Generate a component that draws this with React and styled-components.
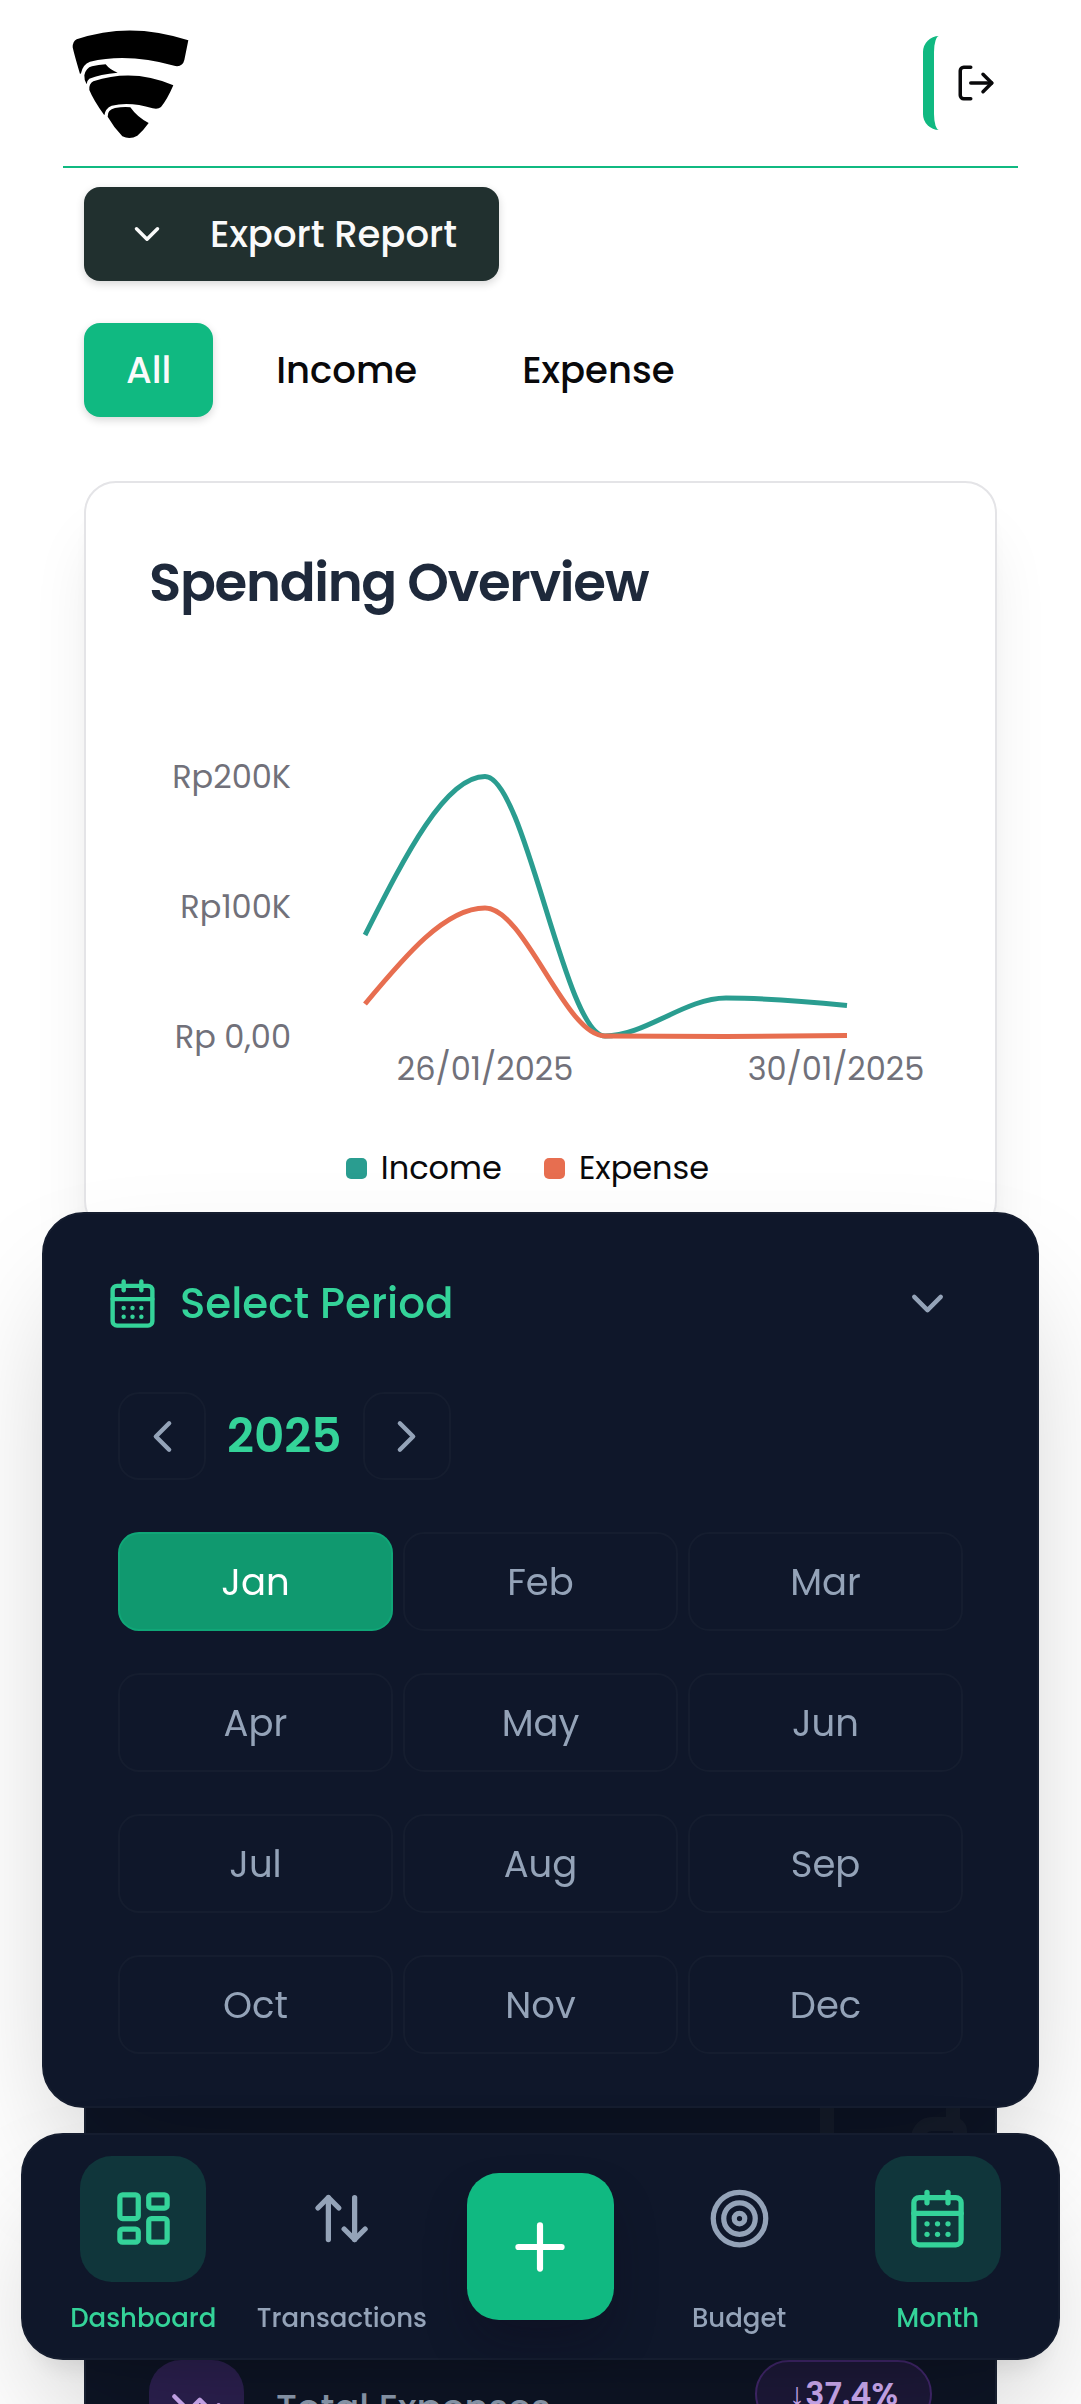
import React from "react";
import styled, { createGlobalStyle, css } from "styled-components";
import {
  ArrowUpDown,
  CalendarDays,
  ChevronDown,
  ChevronLeft,
  ChevronRight,
  LayoutDashboard,
  LogOut,
  Plus,
  Target,
  TrendingDown,
  Wallet,
} from "lucide-react";

const color = {
  emerald: "#10b981",
  mint: "#34d399",
  navy: "#0f172a",
  hairline: "#151d2f",
  slate: "#94a3b8",
  muted: "#71717a",
  income: "#2a9d90",
  expense: "#e76e50",
};

const GlobalStyle = createGlobalStyle`
  * { box-sizing: border-box; }
  body {
    margin: 0;
    background: #fff;
    font-family: Poppins, "Liberation Sans", sans-serif;
    color: #09090b;
  }
  button {
    font: inherit;
    color: inherit;
    background: none;
    border: 0;
    margin: 0;
    padding: 0;
    cursor: pointer;
  }
`;

const Page = styled.div`
  height: 100vh;
  overflow: hidden;
`;

const Header = styled.header`
  display: flex;
  align-items: center;
  justify-content: space-between;
  height: 168px;
  margin: 0 63px;
  border-bottom: 2px solid ${color.emerald};
`;

const LogoutButton = styled.button`
  display: flex;
  align-items: center;
  height: 94px;
  padding: 0 21px;
  border-left: 11px solid ${color.emerald};
  border-radius: 16px;
`;

const Content = styled.main`
  display: flex;
  flex-direction: column;
  align-items: flex-start;
  padding: 19px 84px 0;
`;

const ActionButton = styled.button`
  display: flex;
  align-items: center;
  height: 94px;
  padding: 0 42px;
  border-radius: 16px;
  font-size: 37px;
  font-weight: 500;
  ${(p) =>
    p.$fill &&
    css`
      background: ${p.$fill};
      color: #fafafa;
      box-shadow: 0 3px 8px rgba(0, 0, 0, 0.16);
    `}
`;

const ExportLabel = styled.span`
  margin-left: 42px;
`;

const Tabs = styled.div`
  display: flex;
  gap: 21px;
  margin: 42px 0 64px;
`;

const Card = styled.section`
  width: 100%;
  padding: 63px 63px 42px;
  border: 2px solid #e4e4e7;
  border-radius: 32px;
  background: #fff;
  box-shadow: 0 52px 66px -13px rgba(0, 0, 0, 0.1),
    0 21px 26px -16px rgba(0, 0, 0, 0.1);
`;

const CardTitle = styled.h2`
  margin: 0;
  font-size: 53px;
  line-height: 74px;
  font-weight: 600;
  letter-spacing: -0.025em;
  color: #1e293b;
`;

const Chart = styled.svg`
  display: block;
  width: 100%;
  margin-top: 140px;
  overflow: visible;
  font-size: 32px;
`;

const AxisLabel = styled.text`
  fill: ${color.muted};
`;

const Line = styled.path`
  fill: none;
  stroke: ${(p) => p.$color};
  stroke-width: 5;
`;

const Legend = styled.ul`
  display: flex;
  justify-content: center;
  gap: 42px;
  margin: 57px 0 0;
  padding: 0 26px 0 0;
  list-style: none;
  font-size: 32px;
  line-height: 42px;
`;

const LegendItem = styled.li`
  display: flex;
  align-items: center;
  gap: 14px;
  &::before {
    content: "";
    width: 21px;
    height: 21px;
    border-radius: 5px;
    background: ${(p) => p.$color};
  }
`;

const Stats = styled.div`
  display: flex;
  flex-direction: column;
  gap: 42px;
  width: 100%;
  margin-top: 784px;
`;

const StatCard = styled.section`
  position: relative;
  height: 236px;
  padding: 63px;
  border: 2px solid #1a2234;
  border-radius: 32px;
  background: #0e1526;
  overflow: hidden;
`;

const Watermark = styled.span`
  position: absolute;
  top: 21px;
  right: 21px;
  color: #161d2c;
  line-height: 0;
`;

const StatRow = styled.div`
  display: flex;
  align-items: flex-start;
  justify-content: space-between;
`;

const StatName = styled.div`
  display: flex;
  align-items: center;
  gap: 32px;
  font-size: 37px;
  line-height: 42px;
  font-weight: 500;
  color: ${color.slate};
`;

const StatIcon = styled.span`
  display: flex;
  align-items: center;
  justify-content: center;
  width: 95px;
  height: 95px;
  border-radius: 32px;
  background: #2d2152;
  color: #d8b4fe;
`;

const Pill = styled.span`
  display: flex;
  align-items: center;
  height: 68px;
  padding: 0 32px;
  border: 2px solid #43286f;
  border-radius: 34px;
  background: #1e1a3b;
  font-size: 32px;
  line-height: 42px;
  font-weight: 600;
  color: #d8b4fe;
`;

const Sheet = styled.section`
  position: fixed;
  left: 42px;
  right: 42px;
  bottom: 296px;
  padding: 42px 62px 52px;
  border: 2px solid ${color.hairline};
  border-radius: 42px;
  background: ${color.navy};
  box-shadow: 0 66px 131px -32px rgba(0, 0, 0, 0.25);
`;

const SheetHeader = styled.div`
  display: flex;
  align-items: center;
  justify-content: space-between;
  height: 94px;
`;

const SheetTitle = styled.h3`
  display: flex;
  align-items: center;
  gap: 21px;
  margin: 0;
  font-size: 42px;
  font-weight: 500;
  color: ${color.mint};
`;

const CollapseButton = styled.button`
  display: flex;
  padding: 21px;
  color: ${color.slate};
`;

const SheetBody = styled.div`
  padding: 0 12px;
`;

const YearRow = styled.div`
  display: flex;
  align-items: center;
  gap: 21px;
  margin-top: 42px;
`;

const StepButton = styled.button`
  display: flex;
  align-items: center;
  justify-content: center;
  width: 88px;
  height: 88px;
  border: 2px solid ${color.hairline};
  border-radius: 21px;
  color: ${color.slate};
`;

const Year = styled.strong`
  font-size: 47px;
  font-weight: 600;
  color: ${color.mint};
`;

const Months = styled.div`
  display: grid;
  grid-template-columns: repeat(3, 1fr);
  column-gap: 10px;
  row-gap: 42px;
  margin-top: 52px;
`;

const MonthButton = styled.button`
  height: 99px;
  border: 2px solid ${(p) => (p.$active ? "#10a677" : color.hairline)};
  border-radius: 21px;
  background: ${(p) => (p.$active ? "#10996f" : "transparent")};
  color: ${(p) => (p.$active ? "#fff" : color.slate)};
  font-size: 37px;
`;

const NavBar = styled.nav`
  position: fixed;
  left: 21px;
  right: 21px;
  bottom: 44px;
  display: grid;
  grid-template-columns: repeat(5, 1fr);
  align-items: center;
  justify-items: center;
  height: 227px;
  padding: 0 21px;
  border: 2px solid ${color.hairline};
  border-radius: 42px;
  background: ${color.navy};
  box-shadow: 0 66px 131px -32px rgba(0, 0, 0, 0.25),
    0 21px 26px -16px rgba(0, 0, 0, 0.1);
`;

const NavItem = styled.button`
  display: flex;
  flex-direction: column;
  align-items: center;
  gap: 16px;
  font-size: 26px;
  line-height: 40px;
  font-weight: 500;
  color: ${(p) => (p.$active ? color.mint : color.slate)};
`;

const NavIcon = styled.span`
  display: flex;
  align-items: center;
  justify-content: center;
  width: 126px;
  height: 126px;
  border-radius: 32px;
  background: ${(p) => (p.$active ? "#10363b" : "transparent")};
`;

const AddButton = styled.button`
  display: flex;
  align-items: center;
  justify-content: center;
  width: 147px;
  height: 147px;
  border-radius: 32px;
  background: ${color.emerald};
  color: #fff;
  box-shadow: 0 26px 48px -8px rgba(15, 10, 25, 0.35);
`;

function Logo() {
  return (
    <svg width="126" height="126" viewBox="39 30 378 378" role="img" aria-label="Logo">
      <path d="M80 88Q240 33 415 91L403 150Q398 171 376 168Q235 128 120 155Q98 163 93 190L90 192Q73 135 68 112Q68 94 80 88Z" />
      <path d="M103 196Q108 173 126 169Q145 165 167 163Q180 180 203 188Q150 192 118 206Q110 212 110 223Q102 210 103 196Z" />
      <path d="M118 240Q116 222 130 214Q250 174 370 226Q352 268 333 291Q324 299 308 295Q240 274 185 287Q166 295 163 316Q130 270 118 240Z" />
      <path d="M173 320Q172 299 195 294Q220 290 241 292Q262 322 296 339Q280 362 262 377Q240 390 217 379Q190 350 173 320Z" />
    </svg>
  );
}

const yTicks = [
  ["Rp200K", 28],
  ["Rp100K", 158],
  ["Rp 0,00", 288],
];

const xTicks = [
  ["26/01/2025", 336],
  ["30/01/2025", 687],
];

function SpendingChart() {
  return (
    <Chart viewBox="0 0 783 330" role="img" aria-label="Income and expense by day">
      {yTicks.map(([label, y]) => (
        <AxisLabel key={label} x="142" y={y} textAnchor="end">
          {label}
        </AxisLabel>
      ))}
      {xTicks.map(([label, x]) => (
        <AxisLabel key={label} x={x} y="320" textAnchor="middle">
          {label}
        </AxisLabel>
      ))}
      <Line
        $color={color.income}
        d="M216 175C256 96 296 16.500 336 16.500S416 276 456 276S536 238 577 238S658 241.500 698 245.500"
      />
      <Line
        $color={color.expense}
        d="M216 244C256 196 296 148 336 148S416 276 456 276S536 276.500 577 276.500S658 276 698 275.500"
      />
    </Chart>
  );
}

const months = "Jan Feb Mar Apr May Jun Jul Aug Sep Oct Nov Dec".split(" ");

export default function App() {
  return (
    <Page>
      <GlobalStyle />
      <Header>
        <Logo />
        <LogoutButton aria-label="Log out">
          <LogOut size={42} />
        </LogoutButton>
      </Header>

      <Content>
        <ActionButton $fill="#21302f">
          <ChevronDown size={42} />
          <ExportLabel>Export Report</ExportLabel>
        </ActionButton>
        <Tabs>
          <ActionButton $fill={color.emerald}>All</ActionButton>
          <ActionButton>Income</ActionButton>
          <ActionButton>Expense</ActionButton>
        </Tabs>
        <Card>
          <CardTitle>Spending Overview</CardTitle>
          <SpendingChart />
          <Legend>
            <LegendItem $color={color.income}>Income</LegendItem>
            <LegendItem $color={color.expense}>Expense</LegendItem>
          </Legend>
        </Card>
        <Stats>
          <StatCard>
            <Watermark>
              <Wallet size={168} />
            </Watermark>
          </StatCard>
          <StatCard>
            <StatRow>
              <StatName>
                <StatIcon>
                  <TrendingDown size={53} />
                </StatIcon>
                Total Expenses
              </StatName>
              <Pill>↓37.4%</Pill>
            </StatRow>
          </StatCard>
        </Stats>
      </Content>

      <Sheet>
        <SheetHeader>
          <SheetTitle>
            <CalendarDays size={53} />
            Select Period
          </SheetTitle>
          <CollapseButton aria-label="Collapse">
            <ChevronDown size={53} />
          </CollapseButton>
        </SheetHeader>
        <SheetBody>
          <YearRow>
            <StepButton aria-label="Previous year">
              <ChevronLeft size={53} />
            </StepButton>
            <Year>2025</Year>
            <StepButton aria-label="Next year">
              <ChevronRight size={53} />
            </StepButton>
          </YearRow>
          <Months>
            {months.map((month) => (
              <MonthButton key={month} $active={month === "Jan"}>
                {month}
              </MonthButton>
            ))}
          </Months>
        </SheetBody>
      </Sheet>

      <NavBar>
        <NavItem $active>
          <NavIcon $active>
            <LayoutDashboard size={63} />
          </NavIcon>
          Dashboard
        </NavItem>
        <NavItem>
          <NavIcon>
            <ArrowUpDown size={63} />
          </NavIcon>
          Transactions
        </NavItem>
        <AddButton aria-label="Add">
          <Plus size={74} />
        </AddButton>
        <NavItem>
          <NavIcon>
            <Target size={63} />
          </NavIcon>
          Budget
        </NavItem>
        <NavItem $active>
          <NavIcon $active>
            <CalendarDays size={63} />
          </NavIcon>
          Month
        </NavItem>
      </NavBar>
    </Page>
  );
}
